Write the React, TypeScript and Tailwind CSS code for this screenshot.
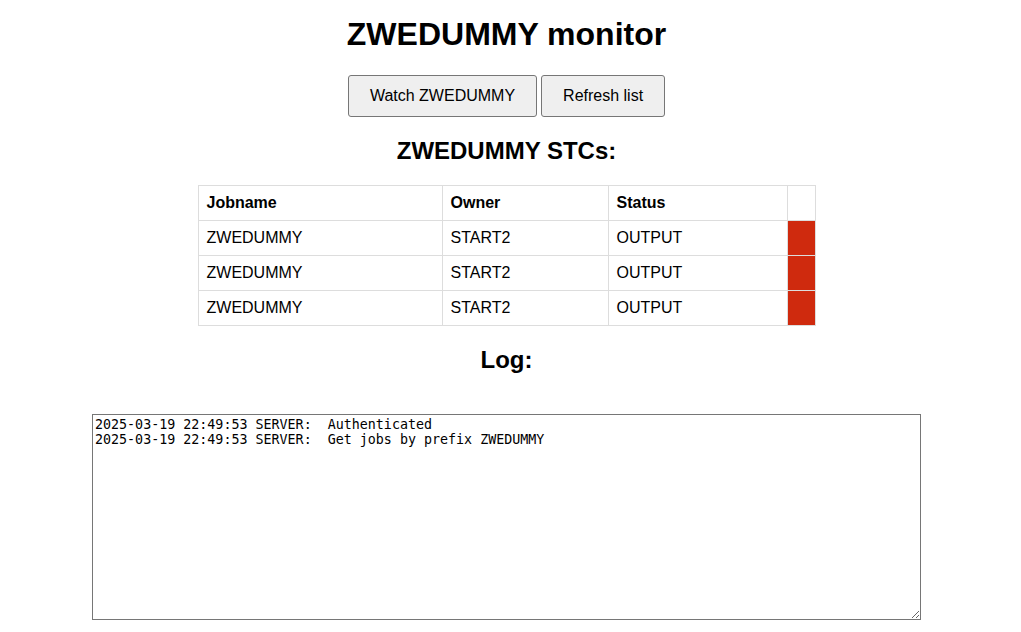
const jobs = [
  { name: "ZWEDUMMY", owner: "START2", status: "OUTPUT" },
  { name: "ZWEDUMMY", owner: "START2", status: "OUTPUT" },
  { name: "ZWEDUMMY", owner: "START2", status: "OUTPUT" },
];

const log = [
  "2025-03-19 22:49:53 SERVER:  Authenticated",
  "2025-03-19 22:49:53 SERVER:  Get jobs by prefix ZWEDUMMY",
].join("\n");

export default function App() {
  return (
    <div className="flex w-[1013px] flex-col items-center bg-white font-['Liberation_Sans',Arial,sans-serif] text-black">
      <h1 className="mt-[16px] text-[32px] font-bold leading-[37px]">
        ZWEDUMMY monitor
      </h1>

      <div className="mt-[22px] flex gap-[4px]">
        <button className="rounded-[3px] border border-[#767676] bg-[#efefef] px-[21px] py-[11px] text-[16px] leading-[18px]">
          Watch ZWEDUMMY
        </button>
        <button className="rounded-[3px] border border-[#767676] bg-[#efefef] px-[21px] py-[11px] text-[16px] leading-[18px]">
          Refresh list
        </button>
      </div>

      <h2 className="mt-[20px] text-[24px] font-bold leading-[28px]">
        ZWEDUMMY STCs:
      </h2>

      <table className="mt-[20px] w-[617px] table-fixed border-collapse text-[16px] leading-[18px]">
        <colgroup>
          <col className="w-[244px]" />
          <col className="w-[166px]" />
          <col className="w-[179px]" />
          <col className="w-[28px]" />
        </colgroup>
        <thead>
          <tr className="h-[35px]">
            <th className="border border-[#dddddd] px-[8px] text-left font-bold">
              Jobname
            </th>
            <th className="border border-[#dddddd] px-[8px] text-left font-bold">
              Owner
            </th>
            <th className="border border-[#dddddd] px-[8px] text-left font-bold">
              Status
            </th>
            <th className="border border-[#dddddd]" />
          </tr>
        </thead>
        <tbody>
          {jobs.map((job, i) => (
            <tr key={i} className="h-[35px]">
              <td className="border border-[#dddddd] px-[8px]">{job.name}</td>
              <td className="border border-[#dddddd] px-[8px]">{job.owner}</td>
              <td className="border border-[#dddddd] px-[8px]">{job.status}</td>
              <td className="border border-[#dddddd] bg-[#cf2a0e]" />
            </tr>
          ))}
        </tbody>
      </table>

      <h2 className="mt-[20px] text-[24px] font-bold leading-[28px]">Log:</h2>

      <textarea
        readOnly
        value={log}
        className="mt-[40px] h-[206px] w-[829px] border border-[#767676] bg-white px-[2px] pt-[2px] pb-[1px] font-['DejaVu_Sans_Mono',monospace] text-[13.33px] leading-[15px] outline-none"
      />
    </div>
  );
}
